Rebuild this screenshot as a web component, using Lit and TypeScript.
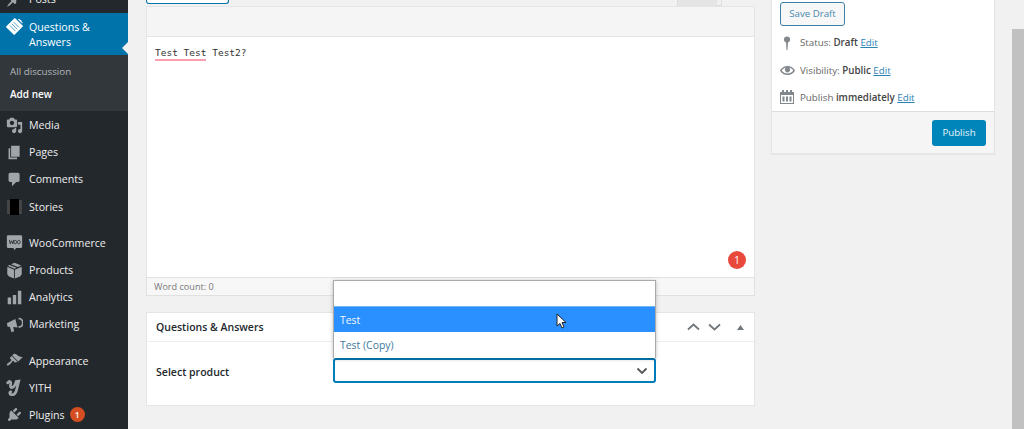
import { LitElement, html, css, svg } from "lit";
import { customElement } from "lit/decorators.js";

type Item = { label: string; icon: unknown; sep?: boolean; badge?: string };

const I = {
  posts: svg`<path d="M10.440 3.020l1.820-1.820 6.360 6.350-1.830 1.820c-1.050-.68-2.480-.57-3.410.36l-.75.75c-.92.93-1.040 2.350-.35 3.410l-1.830 1.820-2.410-2.410-2.800 2.790c-.42.420-3.380 2.710-3.800 2.290s1.860-3.390 2.280-3.810l2.790-2.790L4.100 9.360l1.830-1.820c1.050.69 2.480.57 3.400-.36l.75-.75c.93-.92 1.050-2.350.36-3.410z"/>`,
  qa: svg`<g transform="rotate(45 10 10)"><rect x="3" y="2.500" width="14" height="15" rx="1"/><path d="M5.500 7h9M5.500 10h9M5.500 13h9" stroke="#4a9cc7" stroke-width="1"/></g><path d="M14 1.500l1.500-.5 1 1.200 1.500.3.300 1.500 1.200 1-.5 1.500-5-5z"/>`,
  media: svg`<path fill-rule="evenodd" d="M13 11V4c0-.55-.45-1-1-1h-1.670L9 1H5L3.670 3H2c-.55 0-1 .45-1 1v7c0 .55.45 1 1 1h10c.55 0 1-.45 1-1zM7 4.500c1.380 0 2.500 1.120 2.500 2.500S8.380 9.500 7 9.500 4.500 8.380 4.500 7 5.620 4.500 7 4.500zM14 6h5v10.500c0 1.380-1.120 2.500-2.500 2.500S14 17.880 14 16.500s1.120-2.500 2.500-2.500c.17 0 .34.02.5.050V9h-3V6zm-4 8.050V13h2v3.500c0 1.380-1.120 2.500-2.500 2.500S7 17.880 7 16.500 8.120 14 9.500 14c.17 0 .34.02.5.050z"/>`,
  pages: svg`<path d="M6 15V2h10v13H6zm-1 1h8v2H3V5h2v11z"/>`,
  comments: svg`<path d="M5 2h9c1.100 0 2 .9 2 2v7c0 1.100-.9 2-2 2h-2l-5 5v-5H5c-1.100 0-2-.9-2-2V4c0-1.100.9-2 2-2z"/>`,
  woo: svg`<path d="M2.500 1.500h15A1.500 1.500 0 0 1 19 3v12a1.500 1.500 0 0 1-1.500 1.500H12L9.500 19 9 16.500H2.500A1.500 1.500 0 0 1 1 15V3a1.500 1.500 0 0 1 1.500-1.500z"/><path d="M4 7l1 4.500L6.500 8 8 11.500 9 7M11 7.500a1.700 2 0 1 0 .01 0zM15 7.500a1.700 2 0 1 0 .01 0z" fill="none" stroke="#23282d" stroke-width="1"/>`,
  products: svg`<path d="M10 1l8 3.200-4 1.800-8-3.300zM4 3.500 2 4.500 10 8l2.500-1.200z"/><path d="M1.500 5.500 9.500 9v10.500l-6-2.500-2-2.500zM18.500 5.500 10.500 9v10.500l6-2.500 2-2.500z"/>`,
  analytics: svg`<path d="M18 18V2h-4v16h4zm-6 0V7H8v11h4zm-6 0v-8H2v8h4z"/>`,
  marketing: svg`<path fill-rule="evenodd" d="M1 8.500 11 3.500l2.500 10-5-.5L9.500 18l-3 1-2-6.500-2.500.5zM15 2a6 6 0 0 1 0 12l-.5-1.800a4.200 4.200 0 0 0 0-8.400z"/>`,
  appearance: svg`<path d="M14.480 11.060L7.410 3.990l1.500-1.500c.5-.56 2.300-.47 3.510.32 1.210.8 1.430 1.280 2.910 2.100 1.180.64 2.450 1.260 4.450.85zm-.71.71L6.700 4.700 4.930 6.470c-.39.39-.39 1.020 0 1.410l1.060 1.060c.39.39.39 1.030 0 1.420-.6.6-1.430 1.110-2.210 1.690-.35.26-.7.53-1.010.84C1.430 13.230.4 14.910 1.200 15.710c.8.8 2.480-.23 3.820-1.570.31-.31.58-.66.84-1.010.58-.78 1.090-1.610 1.690-2.210.39-.39 1.020-.39 1.410 0l1.060 1.060c.39.39 1.020.39 1.410 0z"/>`,
  yith: svg`<path d="M2 4.500c2-2.500 4-2 3.500 1-.5 2.500-.5 5 1.500 4.500 2-.5 4-3.500 5-7l3-.5-2.500 10c-.8 3.500-3 6.500-6 6-2.500-.5-2.500-3-1-3.500" fill="none" stroke="#a0a5aa" stroke-width="3.200" stroke-linecap="round"/>`,
  plugins: svg`<path d="M13.110 4.360L9.870 7.600 8 5.730l3.240-3.240c.35-.34 1.050-.2 1.560.32.52.51.66 1.210.31 1.550zm-8 1.770l.91-1.120 9.010 9.010-1.190.84c-.71.71-2.630 1.160-3.820 1.160H6.140L4.900 17.260c-.59.59-1.540.59-2.120 0-.59-.58-.59-1.530 0-2.120l1.240-1.240v-3.880c0-1.130.4-3.190 1.090-3.890zm7.260 3.970l3.240-3.240c.34-.35 1.040-.21 1.550.31.52.51.66 1.210.31 1.550l-3.240 3.250z"/>`,
};

const group1: Item[] = [
  { label: "Media", icon: I.media },
  { label: "Pages", icon: I.pages },
  { label: "Comments", icon: I.comments },
  { label: "Stories", icon: null },
];
const group2: Item[] = [
  { label: "WooCommerce", icon: I.woo, sep: true },
  { label: "Products", icon: I.products },
  { label: "Analytics", icon: I.analytics },
  { label: "Marketing", icon: I.marketing },
];
const group3: Item[] = [
  { label: "Appearance", icon: I.appearance, sep: true },
  { label: "YITH", icon: I.yith },
  { label: "Plugins", icon: I.plugins, badge: "1" },
];

@customElement("app-root")
export class AppRoot extends LitElement {
  static styles = css`
    :host {
      display: block;
      width: 1024px;
      height: 429px;
      overflow: hidden;
      position: relative;
      background: #f1f1f1;
      font-family: "Open Sans", "Noto Sans", sans-serif;
      font-size: 10.650px;
      color: #444;
    }
    * { box-sizing: border-box; }
    .page { display: flex; height: 429px; }

    /* sidebar */
    .side { width: 128px; flex: none; background: #23282d; color: #eee; overflow: hidden; }
    .clip { height: 13px; overflow: hidden; display: flex; align-items: flex-end; }
    .item { display: flex; align-items: center; height: 27.200px; width: 128px; flex: none; color: #eee; }
    .item.sep { margin-top: 9px; }
    .ico { width: 29px; flex: none; display: flex; justify-content: center; }
    .ico svg { width: 17px; height: 17px; fill: #a0a5aa; display: block; }
    .stories-bar { width: 9px; height: 16px; background: #000; box-shadow: -4px 0 0 -1px #444, 4px 0 0 -1px #444; }
    .current {
      background: #0073aa; color: #fff; height: 42px; display: flex;
      align-items: center; position: relative; line-height: 15px;
    }
    .current > span { padding-top: 1px; }
    .current .ico { align-self: flex-start; padding-top: 5px; }
    .current .ico svg { fill: #fff; width: 17px; height: 17px; }
    .current::after {
      content: ""; position: absolute; right: 0; top: 29px;
      border: 6px solid transparent; border-right-color: #f1f1f1; border-left-width: 0;
    }
    .sub { background: #32373c; height: 56px; padding: 5px 0 0 10px; margin-bottom: .5px; }
    .sub div { height: 22.500px; display: flex; align-items: center; color: #b4b9be; font-size: 9.800px; }
    .sub div.on { color: #fff; font-weight: 600; font-size: 10px; }
    .bubble {
      display: inline-flex; align-items: center; justify-content: center; width: 15px; height: 15px;
      border-radius: 50%; background: #d54e21; color: #fff; font-size: 8.500px; font-weight: 600; margin-left: 5px;
    }

    /* main */
    .main { flex: 1; display: flex; gap: 16px; padding-left: 18px; align-items: flex-start; }
    .col { width: 609px; flex: none; }
    .strip { height: 6px; display: flex; }
    .media-btn {
      width: 83px; height: 4px; background: #fff; border: 1.500px solid #0073aa; border-top: 0;
      border-radius: 0 0 3px 3px; flex: none;
    }
    .tabs { flex: 1; display: flex; justify-content: flex-end; padding-right: 33px; }
    .tab1 { width: 40px; background: #e5e5e5; height: 6px; border-left: 1px solid #ddd; }
    .tab2 { width: 5px; background: #f1f1f1; height: 6px; border-right: 1px solid #ddd; border-bottom: 1px solid #ddd; }
    .editor { border: 1px solid #e5e5e5; border-bottom: 0; background: #fff; }
    .toolbar { height: 30px; background: #f5f5f5; border-bottom: 1px solid #e5e5e5; }
    .area {
      height: 240px; padding: 9px 8px; position: relative; background: #fff;
      font-family: "DejaVu Sans Mono", monospace; font-size: 9.500px; color: #333; line-height: 14px;
    }
    .area .sp { position: relative; }
    .area .sp::after { content: ""; position: absolute; left: 0; right: 0; bottom: -3px; height: 2.500px; background: #fb9eb0; }
    .grammarly {
      position: absolute; right: 8px; bottom: 8px; width: 18px; height: 18px; border-radius: 50%;
      background: #e9483d; color: #fff; font-size: 10.500px; display: flex; align-items: center; justify-content: center;
      font-family: "Open Sans", sans-serif;
    }
    .wc {
      height: 19px; border: 1px solid #e0e0e0; background: #f7f7f7; display: flex; align-items: center;
      padding-left: 7px; font-size: 9.100px; color: #777;
    }
    .meta { margin-top: 16px; height: 94px; background: #fff; border: 1px solid #e5e5e5; position: relative; }
    .meta-h {
      height: 29px; border-bottom: 1px solid #eee; display: flex; align-items: center;
      padding-left: 9px; font-weight: 600; color: #23282d; justify-content: space-between; font-size: 10.500px;
    }
    .arrows { display: flex; align-items: center; gap: 8px; padding-right: 10.500px; }
    .arrows svg { display: block; fill: none; stroke: #72777c; stroke-width: 1.800px; }
    .arrows .tri { fill: #72777c; stroke: none; margin-left: 8px; }
    .meta-b { display: flex; align-items: center; height: 62px; padding: 0 0 2px 9px; font-weight: 600; color: #23282d; font-size: 10.550px; }
    .label { width: 177px; flex: none; }
    .select {
      width: 323px; height: 25px; border: 2px solid #007cba; border-radius: 3px; background: #fff;
      display: flex; align-items: center; justify-content: flex-end; padding-right: 6px; margin-top: -3px;
    }
    .select svg { fill: none; stroke: #555; stroke-width: 1.800px; display: block; }
    .drop {
      position: absolute; left: 186px; top: -33px; width: 323px; background: #fff;
      border: 1px solid #aaa; border-bottom: 0; box-shadow: 0 1px 4px rgba(0,0,0,.25);
      font-weight: 400; font-size: 10.450px; color: #41799c; z-index: 2;
    }
    .opt { height: 26px; display: flex; align-items: center; padding-left: 6px; }
    .opt:first-child { height: 25px; }
    .opt.on { background: #2a8fff; color: #f2f8ff; border-top: 1px solid #6eb6f5; position: relative; }
    .cursor { position: absolute; left: 222px; top: 6px; width: 11px; height: 16px; }

    /* publish */
    .box { width: 224px; flex: none; background: #fff; border: 1px solid #e5e5e5; border-top: 0; height: 154px; display: flex; flex-direction: column; box-shadow: 0 1px 1px rgba(0,0,0,.04); }
    .box-b { flex: 1; padding: 2px 8px 0; }
    .save {
      width: 65px; height: 23.500px; border: 1.500px solid #3a82a8; border-radius: 3px; background: #f7f7f7;
      color: #4a8aae; display: flex; align-items: center; justify-content: center; font-size: 9.700px;
      white-space: nowrap; margin-bottom: 3.900px;
    }
    .row { height: 27.200px; display: flex; align-items: center; white-space: pre; font-size: 9.750px; color: #666; }
    .row b { font-weight: 600; color: #444; }
    .row a { color: #2c82b4; text-decoration: underline; }
    .row .i { width: 20px; flex: none; display: flex; justify-content: flex-start; }
    .row svg { fill: #82878c; display: block; }
    .foot { height: 42px; background: #f5f5f5; border-top: 1px solid #ddd; display: flex; align-items: center; justify-content: flex-end; padding: 0 8px; }
    .pub {
      width: 54px; height: 26px; border-radius: 3px; background: #0085ba; color: #eaf6fb; display: flex;
      align-items: center; justify-content: center; font-size: 9.700px;
    }
    .thumb { position: absolute; right: 0; top: 29px; width: 12px; bottom: 0; background: #c1c1c1; }
  `;

  private renderItem(i: Item) {
    return html`<div class="item ${i.sep ? "sep" : ""}">
      <div class="ico">
        ${i.icon
          ? html`<svg viewBox="0 0 20 20">${i.icon}</svg>`
          : html`<div class="stories-bar"></div>`}
      </div>
      <span>${i.label}</span>
      ${i.badge ? html`<span class="bubble">${i.badge}</span>` : ""}
    </div>`;
  }

  render() {
    return html`<div class="page">
        <nav class="side">
          <div class="clip">${this.renderItem({ label: "Posts", icon: I.posts })}</div>
          <div class="current">
            <div class="ico"><svg viewBox="0 0 20 20">${I.qa}</svg></div>
            <span>Questions &amp;<br />Answers</span>
          </div>
          <div class="sub">
            <div>All discussion</div>
            <div class="on">Add new</div>
          </div>
          ${group1.map((i) => this.renderItem(i))}
          ${group2.map((i) => this.renderItem(i))}
          ${group3.map((i) => this.renderItem(i))}
        </nav>
        <main class="main">
          <section class="col">
            <div class="strip">
              <div class="media-btn"></div>
              <div class="tabs"><div class="tab1"></div><div class="tab2"></div></div>
            </div>
            <div class="editor">
              <div class="toolbar"></div>
              <div class="area">
                <span class="sp">Test Test</span> Test2?
                <div class="grammarly">1</div>
              </div>
            </div>
            <div class="wc">Word count: 0</div>
            <div class="meta">
              <div class="meta-h">
                <span>Questions &amp; Answers</span>
                <div class="arrows">
                  <svg width="13" height="8" viewBox="0 0 13 8"><path d="M1 6.500l5.500-5 5.500 5" /></svg>
                  <svg width="13" height="8" viewBox="0 0 13 8"><path d="M1 1.500l5.500 5 5.500-5" /></svg>
                  <svg class="tri" width="7" height="5" viewBox="0 0 7 5"><path d="M3.500 0l3.500 5H0z" /></svg>
                </div>
              </div>
              <div class="meta-b">
                <span class="label">Select product</span>
                <div class="select">
                  <svg width="12" height="8" viewBox="0 0 12 8"><path d="M1.500 1.500l4.500 4.500 4.500-4.500" /></svg>
                </div>
              </div>
              <div class="drop">
                <div class="opt"></div>
                <div class="opt on">
                  Test
                  <svg class="cursor" viewBox="0 0 11 16">
                    <path d="M1 1v12l3-2.500 2 4.500 2-1-2-4.500h4z" fill="#fff" stroke="#222" stroke-width="1" />
                  </svg>
                </div>
                <div class="opt">Test (Copy)</div>
              </div>
            </div>
          </section>
          <aside class="box">
            <div class="box-b">
              <div class="save">Save Draft</div>
              <div class="row">
                <span class="i"><svg width="14" height="14" viewBox="0 0 14 14"><circle cx="7" cy="3.500" r="3" /><path d="M6 6h2l-.5 8h-1z" /></svg></span>
                <span>Status: <b>Draft</b> <a>Edit</a></span>
              </div>
              <div class="row">
                <span class="i"><svg width="15" height="15" viewBox="0 0 20 20"><path fill-rule="evenodd" d="M19.700 9.400C17.700 6 14 3.900 10 3.900S2.300 6 .3 9.400L0 10l.3.600c2 3.400 5.700 5.500 9.700 5.500s7.700-2.100 9.700-5.500l.3-.6-.3-.6zM10 14.100c-3.100 0-6-1.600-7.700-4.100C3.600 8 5.700 6.600 8 6.100c-.9.600-1.500 1.700-1.500 2.900 0 1.900 1.600 3.500 3.500 3.500s3.500-1.600 3.500-3.500c0-1.200-.6-2.300-1.500-2.900 2.300.5 4.400 1.900 5.700 3.900-1.700 2.500-4.600 4.100-7.700 4.100z" /></svg></span>
                <span>Visibility: <b>Public</b> <a>Edit</a></span>
              </div>
              <div class="row">
                <span class="i"><svg width="14" height="14" viewBox="0 0 14 14"><path fill-rule="evenodd" d="M0 2h2V0h2v2h2V0h2v2h2V0h2v2h2v12H0zM1 5v8h12V5zM2.500 6.500h2v5h-2zM6 6.500h2v5H6zM9.500 6.500h2v5h-2z" /></svg></span>
                <span>Publish <b>immediately</b> <a>Edit</a></span>
              </div>
            </div>
            <div class="foot"><div class="pub">Publish</div></div>
          </aside>
        </main>
      </div>
      <div class="thumb"></div>`;
  }
}
